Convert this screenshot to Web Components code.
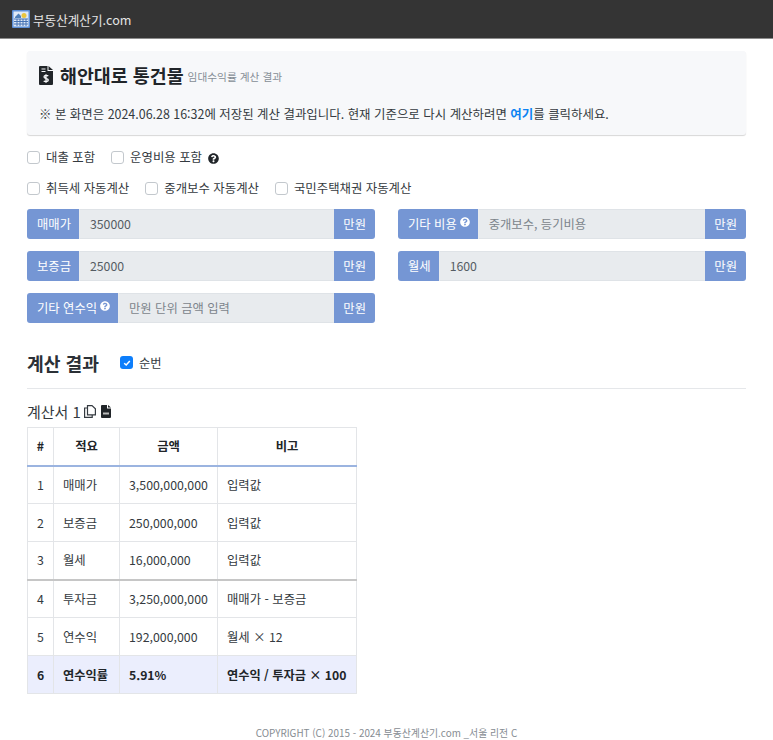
<!DOCTYPE html>
<html lang="ko">
<head>
<meta charset="utf-8">
<title>부동산계산기.com</title>
<style>
html, body { margin: 0; padding: 0; background: #fff; }
body { font-family: "Noto Sans CJK KR", "Noto Sans", sans-serif; font-size: 12.4px; color: #343a40; }
main-page { display: block; }
</style>
</head>
<body>
<main-page>
  <top-bar>부동산계산기.com</top-bar>
  <notice-box></notice-box>
  <check-row>
    <check-option>대출 포함</check-option>
    <check-option help>운영비용 포함</check-option>
  </check-row>
  <check-row>
    <check-option>취득세 자동계산</check-option>
    <check-option>중개보수 자동계산</check-option>
    <check-option>국민주택채권 자동계산</check-option>
  </check-row>
  <field-grid>
    <money-field label="매매가" value="350000"></money-field>
    <money-field label="기타 비용" help placeholder="중개보수, 등기비용"></money-field>
    <money-field label="보증금" value="25000"></money-field>
    <money-field label="월세" value="1600"></money-field>
    <money-field label="기타 연수익" help placeholder="만원 단위 금액 입력"></money-field>
  </field-grid>
  <result-head></result-head>
  <sheet-title></sheet-title>
  <result-table></result-table>
  <page-footer>COPYRIGHT (C) 2015 - 2024 부동산계산기.com _서울 리전 C</page-footer>
</main-page>

<script>
const helpIcon = (size, color) => `<svg width="${size}" height="${size}" viewBox="0 0 512 512" style="display:block"><path fill="${color}" d="M504 256c0 137-111 248-248 248S8 393 8 256 119 8 256 8s248 111 248 248zM262.700 90c-54.500 0-89.300 23-116.500 63.800-3.500 5.300-2.400 12.400 2.700 16.300l34.700 26.300c5.200 3.900 12.600 3 16.700-2.100 17.900-22.700 30.100-35.800 57.300-35.800 20.400 0 45.700 13.100 45.700 32.900 0 15-12.400 22.700-32.500 34-23.500 13.200-54.600 29.600-54.600 70.600V300c0 6.600 5.400 12 12 12h56c6.600 0 12-5.400 12-12v-1.300c0-28.500 83.200-29.700 83.200-106.700 0-58-60.200-102-116.500-102zM256 338c-25.400 0-46 20.600-46 46 0 25.400 20.600 46 46 46s46-20.600 46-46c0-25.400-20.600-46-46-46z"/></svg>`;

customElements.define('top-bar', class extends HTMLElement {
  connectedCallback() {
    this.attachShadow({mode: 'open'});
    this.shadowRoot.innerHTML = `
    <style>
      :host { display: flex; align-items: center; gap: 3px; height: 38px; padding-left: 12px; background: #343434; border-bottom: 1px solid #8c8c8c; color: #e4e4e4; font-size: 12.6px; }
      svg { display: block; }
    </style>
    <svg width="18" height="18" viewBox="0 0 18 18">
      <rect x="0" y="0" width="18" height="18" rx="1" fill="#5b8ed6"/>
      <rect x="1.500" y="1.500" width="15" height="15" fill="#dfe9f6"/>
      <path d="M3 7 L6.500 3.500 L9 6 V8 H3 Z" fill="#4f7fb8"/>
      <circle cx="12" cy="5.500" r="2.500" fill="#e9c53f"/>
      <path d="M2 9 H16 M2 11.500 H16 M2 14 H16 M5 9 V16 M8 9 V16 M11 9 V16 M14 9 V16" stroke="#4573b5" stroke-width="1"/>
    </svg>
    <span><slot></slot></span>`;
  }
});

customElements.define('notice-box', class extends HTMLElement {
  connectedCallback() {
    this.attachShadow({mode: 'open'});
    this.shadowRoot.innerHTML = `
    <style>
      :host { display: block; margin: 12px 27px 0; height: 84px; box-sizing: border-box; padding: 12px 12px 0; background: #f7f8fa; border-radius: 3px; box-shadow: 0 1px 1px rgba(0,0,0,.16); }
      .title { display: flex; align-items: center; height: 24px; color: #212529; }
      svg { display: block; margin-right: 7px; }
      h1 { margin: 0; font-size: 18.4px; font-weight: 700; line-height: 24px; }
      small { margin: 3px 0 0 4px; font-size: 10.7px; color: #868e96; }
      p { margin: 17px 0 0; font-size: 12.45px; line-height: 20px; color: #343a40; }
      a { color: #0d83f2; font-weight: 700; text-decoration: none; }
    </style>
    <div class="title">
      <svg width="14" height="19" viewBox="0 0 14 19">
        <path fill="#212529" d="M1 0 H8.500 V5 H14 V18 a1 1 0 0 1 -1 1 H1 a1 1 0 0 1 -1 -1 V1 a1 1 0 0 1 1 -1 Z M9.500 0 L14 4 H9.500 Z"/>
        <path stroke="#f7f8fa" stroke-width="1" d="M2.500 3 H6.500 M2.500 5.500 H6.500"/>
        <path stroke="#f7f8fa" stroke-width="1.300" fill="none" d="M9.300 10 C8 9 5 9.300 5 11 C5 13 9.300 12.300 9.300 14 C9.300 15.700 6 16 4.700 15 M7 8.300 V16.700"/>
      </svg>
      <h1>해안대로 통건물</h1><small>임대수익률 계산 결과</small>
    </div>
    <p>※ 본 화면은 2024.06.28 16:32에 저장된 계산 결과입니다. 현재 기준으로 다시 계산하려면 <a href="#">여기</a>를 클릭하세요.</p>`;
  }
});

customElements.define('check-row', class extends HTMLElement {
  connectedCallback() {
    this.attachShadow({mode: 'open'});
    this.shadowRoot.innerHTML = `
    <style>
      :host { display: flex; gap: 16px; height: 20px; margin: 0 27px; align-items: center; }
      :host(:nth-of-type(1)) { margin-top: 12px; }
      :host(:nth-of-type(2)) { margin-top: 11px; }
    </style>
    <slot></slot>`;
  }
});

customElements.define('check-option', class extends HTMLElement {
  connectedCallback() {
    this.attachShadow({mode: 'open'});
    const help = this.hasAttribute('help') ? helpIcon(11, '#212529') : '';
    this.shadowRoot.innerHTML = `
    <style>
      :host { display: inline-flex; align-items: center; font-size: 12.4px; color: #343a40; }
      .box { width: 13px; height: 13px; box-sizing: border-box; border: 1px solid #c3c8cd; border-radius: 3px; background: #fff; margin-right: 6px; }
      .help { margin-left: 6px; margin-top: 2px; }
    </style>
    <span class="box"></span><slot></slot>${help ? `<span class="help">${help}</span>` : ''}`;
  }
});

customElements.define('field-grid', class extends HTMLElement {
  connectedCallback() {
    this.attachShadow({mode: 'open'});
    this.shadowRoot.innerHTML = `
    <style>
      :host { display: grid; grid-template-columns: 348px 348px; column-gap: 23px; row-gap: 12px; margin: 11px 27px 0; }
    </style>
    <slot></slot>`;
  }
});

customElements.define('money-field', class extends HTMLElement {
  connectedCallback() {
    this.attachShadow({mode: 'open'});
    const label = this.getAttribute('label');
    const value = this.getAttribute('value');
    const placeholder = this.getAttribute('placeholder');
    const help = this.hasAttribute('help') ? `<span class="q">${helpIcon(10, '#fff')}</span>` : '';
    this.shadowRoot.innerHTML = `
    <style>
      :host { display: flex; height: 30px; font-size: 12.3px; }
      .add { display: flex; align-items: center; padding: 0 8px 0 10px; background: #7596d4; color: #fff; white-space: nowrap; }
      .add.first { border-radius: 3px 0 0 3px; border-right: 1px solid #e9ecef; }
      .add.last { border-radius: 0 3px 3px 0; padding: 0 9px; }
      .q { margin: -5px 0 0 3px; }
      .val { flex: 1; display: flex; align-items: center; padding-left: 10px; background: #e8ebee; border-top: 1px solid #dfe3e7; border-bottom: 1px solid #dfe3e7; color: #555c63; }
      .val.ph { color: #7c848b; }
    </style>
    <div class="add first">${label}${help}</div>
    <div class="val ${value ? '' : 'ph'}">${value || placeholder}</div>
    <div class="add last">만원</div>`;
  }
});

customElements.define('result-head', class extends HTMLElement {
  connectedCallback() {
    this.attachShadow({mode: 'open'});
    this.shadowRoot.innerHTML = `
    <style>
      :host { display: flex; align-items: center; height: 39px; margin: 26px 27px 0; border-bottom: 1px solid #e5e7ea; }
      h2 { margin: 0 21px 12px 0; font-size: 18.2px; font-weight: 700; color: #2b3036; }
      .check { display: flex; align-items: center; font-size: 12.3px; color: #343a40; margin-bottom: 12px; }
      .box { width: 13px; height: 13px; background: #0d7efb; border-radius: 3px; margin-right: 6px; display: flex; align-items: center; justify-content: center; }
    </style>
    <h2>계산 결과</h2>
    <div class="check"><span class="box"><svg width="8" height="8" viewBox="0 0 8 8"><path d="M1.200 4.200 L3.200 6 L6.800 2" fill="none" stroke="#fff" stroke-width="1.500"/></svg></span>순번</div>`;
  }
});

customElements.define('sheet-title', class extends HTMLElement {
  connectedCallback() {
    this.attachShadow({mode: 'open'});
    this.shadowRoot.innerHTML = `
    <style>
      :host { display: flex; align-items: center; height: 24px; margin: 10px 27px 4px; font-size: 15px; color: #343a40; }
      svg { display: block; }
      .copy { margin-left: 3px; }
      .file { margin-left: 5px; }
    </style>
    계산서 1
    <svg class="copy" width="12" height="13" viewBox="0 0 12 13"><path fill="none" stroke="#343a40" stroke-width="1.200" d="M3.500 .6 H8 L11.400 3.800 V9.800 H3.500 Z M3.500 3 H.6 V12.400 H8.200 V9.800"/></svg>
    <svg class="file" width="10" height="13" viewBox="0 0 10 13"><path fill="#212529" d="M0 1 a1 1 0 0 1 1-1 H6 V3.500 H10 V12 a1 1 0 0 1 -1 1 H1 a1 1 0 0 1 -1 -1 Z M7 0 L10 2.600 H7 Z"/><rect x="2" y="7.500" width="6" height="2" fill="#bbb"/></svg>`;
  }
});

customElements.define('result-table', class extends HTMLElement {
  connectedCallback() {
    this.attachShadow({mode: 'open'});
    const rows = [
      ['1', '매매가', '3,500,000,000', '입력값'],
      ['2', '보증금', '250,000,000', '입력값'],
      ['3', '월세', '16,000,000', '입력값'],
      ['4', '투자금', '3,250,000,000', '매매가 - 보증금'],
      ['5', '연수익', '192,000,000', '월세 × 12'],
      ['6', '연수익률', '5.91%', '연수익 / 투자금 × 100']
    ];
    const body = rows.map((r, i) => `<tr class="${i == 2 ? 'sep' : ''} ${i == 5 ? 'hl' : ''}">${r.map(c => `<td>${c}</td>`).join('')}</tr>`).join('');
    this.shadowRoot.innerHTML = `
    <style>
      :host { display: block; margin: 0 27px; width: 330px; }
      table { border-collapse: collapse; table-layout: fixed; width: 329px; font-size: 12.35px; color: #343a40; }
      th, td { border: 1px solid #e3e5e8; padding: 0 0 0 9px; height: 38px; box-sizing: border-box; white-space: nowrap; }
      th { text-align: center; padding: 0; font-weight: 700; color: #212529; height: 38px; border-bottom: 2px solid #9bb4e0; }
      tr.sep td { border-bottom: 2px solid #c6c6c6; }
      tr.hl td { background: #ebeefd; font-weight: 700; color: #212529; font-size: 12.2px; }
    </style>
    <table>
      <colgroup><col style="width:26px"><col style="width:66px"><col style="width:98px"><col style="width:139px"></colgroup>
      <thead><tr><th>#</th><th>적요</th><th>금액</th><th>비고</th></tr></thead>
      <tbody>${body}</tbody>
    </table>`;
  }
});

customElements.define('page-footer', class extends HTMLElement {
  connectedCallback() {
    this.attachShadow({mode: 'open'});
    this.shadowRoot.innerHTML = `
    <style>
      :host { display: block; text-align: center; margin-top: 31px; font-size: 9.9px; line-height: 16px; color: #868c92; }
    </style>
    <slot></slot>`;
  }
});
</script>
</body>
</html>
